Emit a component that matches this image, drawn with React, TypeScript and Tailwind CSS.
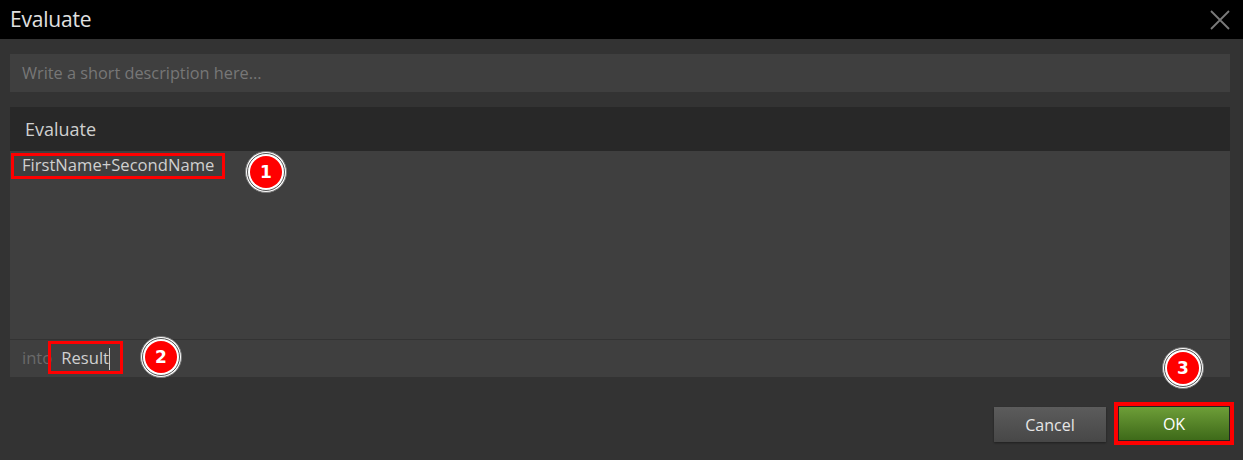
function Badge({ n, className }: { n: string; className: string }) {
  return (
    <div
      className={`absolute w-[42px] h-[42px] rounded-full border border-[#777] bg-white p-[1px] ${className}`}
    >
      <div className="w-full h-full rounded-full border border-[#555] bg-white p-[2px]">
        <div className="w-full h-full rounded-full bg-[#f00] flex items-center justify-center text-white font-bold text-[17px] leading-none font-['DejaVu_Sans',sans-serif]">
          {n}
        </div>
      </div>
    </div>
  );
}

export default function App() {
  return (
    <div className="relative w-[1243px] h-[460px] bg-[#333333] overflow-hidden font-['Open_Sans',sans-serif]">
      <div className="h-[39px] bg-black flex items-center justify-between pl-[10px] pr-[13px]">
        <span className="text-[21px] text-[#e0e0e0] tracking-[-0.2px]">Evaluate</span>
        <svg width="20" height="20" viewBox="0 0 20 20" className="text-[#7a7a7a]">
          <path d="M1 1L19 19M19 1L1 19" stroke="currentColor" strokeWidth="1.8" />
        </svg>
      </div>

      <div className="pl-[10px] pr-[13px] pt-[15px]">
        <div className="h-[38px] bg-[#3f3f3f] flex items-center pl-[12px] text-[16.3px] text-[#777]">
          Write a short description here...
        </div>

        <div className="mt-[15px]">
          <div className="h-[44px] bg-[#282828] flex items-center pl-[15px] text-[18px] text-[#d0d0d0]">
            Evaluate
          </div>
          <div className="relative h-[188px] bg-[#3f3f3f]">
            <div className="absolute left-[1px] top-[2px] w-[214px] h-[26px] border-[3px] border-[#f00]" />
            <div className="pl-[12px] pt-[2px] text-[16.6px] text-[#d0d0d0]">FirstName+SecondName</div>
          </div>
          <div className="relative h-[38px] bg-[#3f3f3f] border-t border-[#333] flex items-center pl-[12px] text-[16.6px]">
            <span className="text-[#6a6a6a]">into</span>
            <div className="absolute left-[38px] top-[1px] w-[75px] h-[33px] border-[3px] border-[#f00]" />
            <span className="ml-[9px] text-[#d0d0d0]">Result</span>
            <span className="w-px h-[22px] bg-[#ccc]" />
          </div>
        </div>

        <div className="flex justify-end gap-[8px] mt-[25px]">
          <button className="mt-[5px] w-[112px] h-[35px] bg-gradient-to-b from-[#5c5c5c] to-[#474747] text-[16px] text-[#e6e6e6] shadow-[0_1px_2px_rgba(0,0,0,0.4)]">
            Cancel
          </button>
          <div className="-mr-[4px] border-[4px] border-[#f00] p-px bg-[#222]">
            <button className="block w-[110px] h-[33px] bg-gradient-to-b from-[#6e9e38] to-[#3e6a19] text-[16px] text-white">
              OK
            </button>
          </div>
        </div>
      </div>

      <Badge n="1" className="left-[245px] top-[151px]" />
      <Badge n="2" className="left-[140px] top-[336px]" />
      <Badge n="3" className="left-[1162px] top-[347px]" />
    </div>
  );
}
